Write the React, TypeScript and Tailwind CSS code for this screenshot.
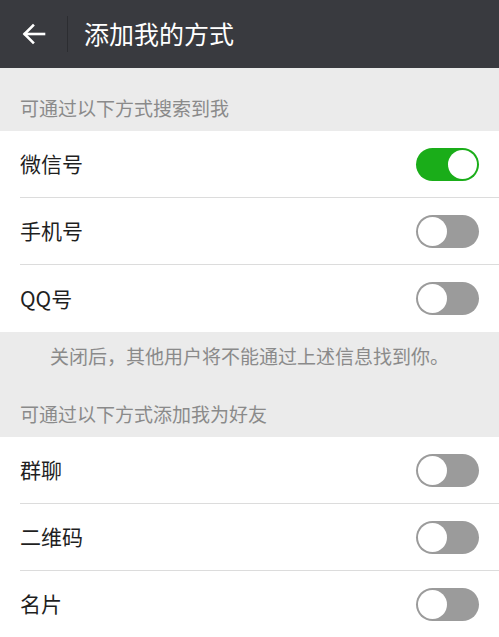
import { useState } from "react";

const font = { fontFamily: '"Noto Sans CJK SC", "Noto Sans", sans-serif' };

function Toggle({ on, onClick }: { on: boolean; onClick: () => void }) {
  return (
    <button
      onClick={onClick}
      className={`flex h-[33px] w-[63px] items-center rounded-full p-[2px] ${on ? "justify-end bg-[#1aad19]" : "justify-start bg-[#9b9b9b]"}`}
    >
      <span className="block h-[29px] w-[29px] rounded-full bg-white" />
    </button>
  );
}

function Row({ label, on, onClick, last }: { label: string; on: boolean; onClick: () => void; last?: boolean }) {
  return (
    <div className="pl-5">
      <div className={`flex h-[67px] items-center justify-between pr-5 ${last ? "" : "border-b border-[#dcdcdc]"}`}>
        <span className="text-[21px] text-[#1f1f1f]">{label}</span>
        <Toggle on={on} onClick={onClick} />
      </div>
    </div>
  );
}

export default function App() {
  const [search, setSearch] = useState([true, false, false]);
  const [add, setAdd] = useState([false, false, false]);

  const flip = (arr: boolean[], set: (v: boolean[]) => void, i: number) => {
    const next = [...arr];
    next[i] = !next[i];
    set(next);
  };

  return (
    <div className="min-h-[637px] w-full bg-[#ebebeb]" style={font}>
      <div className="flex h-[68px] items-center bg-[#393a3f]">
        <div className="flex w-[67px] items-center justify-center">
          <svg width="24" height="22" viewBox="0 0 24 22" fill="none" stroke="white" strokeWidth="2.6" strokeLinecap="square">
            <path d="M22 11H3" />
            <path d="M11 2.5L2.5 11L11 19.5" />
          </svg>
        </div>
        <div className="h-[36px] w-px bg-[#2c2d31]" />
        <span className="pl-4 text-[25px] text-white">添加我的方式</span>
      </div>

      <div className="flex h-[63px] items-end pb-[9px] pl-5 text-[19px] text-[#8a8a8a]">可通过以下方式搜索到我</div>
      <div className="bg-white">
        <Row label="微信号" on={search[0]} onClick={() => flip(search, setSearch, 0)} />
        <Row label="手机号" on={search[1]} onClick={() => flip(search, setSearch, 1)} />
        <Row label="QQ号" on={search[2]} onClick={() => flip(search, setSearch, 2)} last />
      </div>

      <div className="flex h-[48px] items-center justify-center text-[19px] text-[#8a8a8a]">关闭后，其他用户将不能通过上述信息找到你。</div>
      <div className="flex h-[57px] items-end pb-[9px] pl-5 text-[19px] text-[#8a8a8a]">可通过以下方式添加我为好友</div>
      <div className="bg-white">
        <Row label="群聊" on={add[0]} onClick={() => flip(add, setAdd, 0)} />
        <Row label="二维码" on={add[1]} onClick={() => flip(add, setAdd, 1)} />
        <Row label="名片" on={add[2]} onClick={() => flip(add, setAdd, 2)} />
      </div>
    </div>
  );
}
